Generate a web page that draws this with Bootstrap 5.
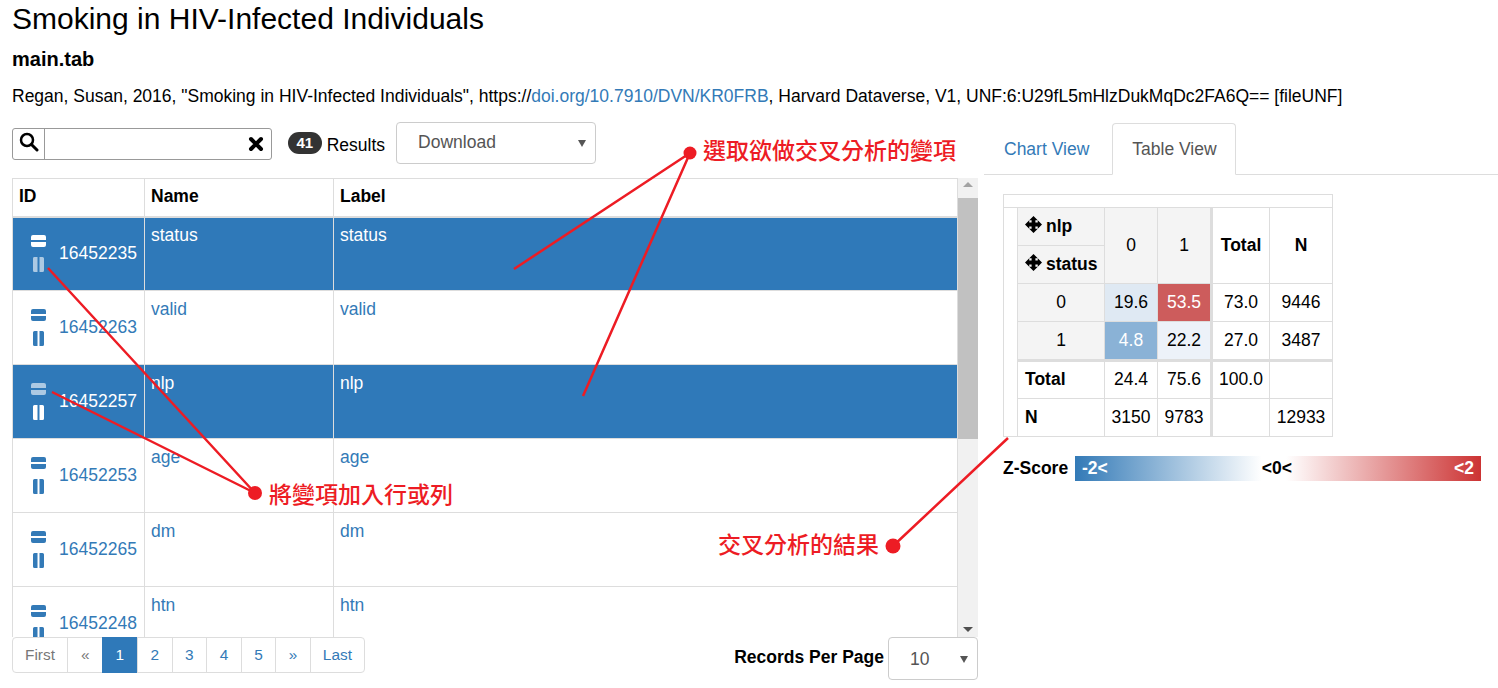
<!DOCTYPE html>
<html lang="en">
<head>
  <meta charset="UTF-8">
  <title>Smoking in HIV-Infected Individuals</title>
  <link rel="stylesheet" href="https://cdn.jsdelivr.net/npm/bootstrap@5.3.3/dist/css/bootstrap.min.css">
  <style>
    html, body { height: 688px; overflow: hidden; }
    body { font-family: "Liberation Sans", Arial, sans-serif; font-size: 17.5px; color: #000; background: #fff; position: relative; }
    a { color: #337ab7; text-decoration: none; }
    .page-head { padding: 0 12px; }
    .page-title { font-size: 30px; line-height: 38px; font-weight: 400; margin: 0; }
    .file-name { font-size: 20px; line-height: 24px; font-weight: 700; margin: 9px 0 13px; }
    .cite { line-height: 24px; margin: 0; white-space: nowrap; }
    .work { margin-top: 14px; }
    .left-pane { width: 978px; padding-left: 12px; flex: none; }
    .right-pane { width: 520px; padding-left: 6px; flex: none; }
    .tool-row { height: 54px; padding-top: 6px; }
    .search-box { width: 260px; height: 32px; border: 1px solid #999; border-radius: 3px; }
    .search-ico { width: 32px; border-right: 1px solid #999; }
    .search-ico svg { display: block; margin: 3px 0 0 6px; }
    .clear-ico { margin-right: 7px; }
    .count-pill { background: #333; color: #fff; font-size: 15px; font-weight: 700; border-radius: 11px; padding: 0 8.500px; height: 22px; line-height: 22px; margin: 0 5px 0 16px; }
    .pick { border: 1px solid #ccc; border-radius: 4px; color: #555; background: #fff; position: relative; line-height: 1; }
    .pick::after { content: ""; position: absolute; right: 9px; top: 50%; margin-top: -3px; border: 4px solid transparent; border-top: 7px solid #555; border-bottom: 0; }
    .pick-dl { width: 200px; height: 42px; margin-left: 11px; padding: 11px 0 0 21px; margin-top: -6px; }
    .grid-wrap { height: 459px; overflow: hidden; position: relative; margin-top: 2px; }
    .var-table { table-layout: fixed; width: 946px; border-collapse: collapse; margin: 0; }
    .var-table th, .var-table td { border: 1px solid #ddd; padding: 6px; vertical-align: top; height: 74px; line-height: 24px; }
    .var-table th { height: 38px; font-weight: 700; border-bottom-width: 2px; vertical-align: middle; padding: 5px 6px 7px; }
    .var-table td { color: #337ab7; }
    .var-table .chosen td { background: #2f79b9; color: #fff; }
    .var-table tbody tr:first-child td { padding-top: 5px; }
    .var-table tbody tr:first-child .id-cell { margin-top: -1px; }
    .id-cell { display: flex; padding-left: 18px; }
    .id-ico { width: 28px; padding-top: 18px; }
    .id-ico svg { display: block; }
    .id-ico svg + svg { margin: 10px 0 0 2px; }
    .id-num { padding-top: 24px; }
    .scroll-rail { position: absolute; right: 0; top: 0; bottom: 0; width: 20px; background: #f1f1f1; }
    .scroll-thumb { position: absolute; left: 0; right: 0; top: 20px; height: 241px; background: #c1c1c1; }
    .scroll-up, .scroll-down { position: absolute; left: 5px; width: 0; border: 5px solid transparent; }
    .scroll-up { top: 4px; border-bottom: 5px solid #a3a3a3; border-top: 0; }
    .scroll-down { bottom: 5px; border-top: 5px solid #505050; border-bottom: 0; }
    .pager-box { display: flex; height: 36px; border: 1px solid #ddd; border-radius: 4px; font-size: 15.4px; line-height: 34px; }
    .pager-box span { padding: 0 12.500px; border-left: 1px solid #ddd; color: #337ab7; text-align: center; }
    .pager-box span:first-child { border-left: 0; color: #777; padding: 0 12px; }
    .pager-box .dim { color: #777; padding: 0 13px; }
    .pager-box .on { background: #2f79b9; color: #fff; border-left: 0; margin: -1px 0; line-height: 36px; padding: 0 13px; }
    .pager-box .far { padding: 0 12px; }
    .rpp-label { font-weight: 700; line-height: 40px; margin-right: 4px; }
    .pick-rpp { width: 90px; height: 43px; padding: 13px 0 0 21px; }
    .view-tabs { height: 52px; margin-top: 1px; border-bottom: 1px solid #ddd; }
    .view-tabs a { display: block; padding: 14px 20px; line-height: 24px; height: 51px; margin-right: 3px; }
    .view-tabs .cur { color: #555; border: 1px solid #ddd; border-bottom-color: #fff; border-radius: 4px 4px 0 0; height: 52px; padding: 13px 18.500px 13px 19px; }
    .pivot-wrap { padding: 19px 0 0 19px; }
    .pivot { border-collapse: collapse; table-layout: fixed; width: 329px; }
    .pivot td { border: 1px solid #ddd; text-align: center; padding: 0 0 2px; height: 38px; line-height: 24px; }
    .pivot .blank { height: 13px; }
    .pivot .thead { background: #f4f4f4; }
    .pivot .tl { text-align: left; padding-left: 7px; font-weight: 700; white-space: nowrap; }
    .pivot .tl svg { vertical-align: -1px; margin-right: 4px; }
    .pivot .hd { font-weight: 700; }
    .pivot .lh { font-weight: 700; text-align: left; padding-left: 7px; }
    .pivot .c-a { border-left-width: 3px; }
    .pivot .r-a td { border-top-width: 3px; }
    .pivot .r-b td { height: 39px; padding-bottom: 1px; }
    .pivot .cell-a { background: #dfe9f3; }
    .pivot .cell-b { background: #cd5c5c; color: #fff; }
    .pivot .cell-c { background: #8ab2d6; color: #fff; }
    .pivot .cell-d { background: #edf2f9; }
    .z-row { padding: 19px 0 0 19px; height: 44px; }
    .z-label { font-weight: 700; width: 72px; line-height: 25px; }
    .z-bar { width: 406px; height: 25px; line-height: 25px; padding: 0 7px; font-weight: 700; background: linear-gradient(90deg, #337ab7, #fff 46%, #fff 52%, #c33); }
    .z-bar .ends { color: #fff; }
    .z-mid { margin-right: 8px; }
    .marks { position: absolute; left: 0; top: 0; width: 1498px; height: 688px; pointer-events: none; }
    .note { position: absolute; color: #ed1c24; font-size: 23px; font-weight: 500; line-height: 28px; white-space: nowrap; font-family: "Liberation Sans", "Noto Sans CJK TC", sans-serif; }
    .note-a { left: 703px; top: 137px; }
    .note-b { left: 269px; top: 481px; }
    .note-c { left: 718px; top: 531px; }
  </style>
</head>
<body>
  <svg width="0" height="0" class="position-absolute">
    <defs>
      <symbol id="ico-rows" viewBox="0 0 15 12"><path d="M2 0h11a2 2 0 0 1 2 2v3H0V2a2 2 0 0 1 2-2zM0 7h15v3a2 2 0 0 1-2 2H2a2 2 0 0 1-2-2z" fill="currentColor"/></symbol>
      <symbol id="ico-cols" viewBox="0 0 11 15"><path d="M1.500 0H4.500v15H1.500A1.500 1.500 0 0 1 0 13.500V1.500A1.500 1.500 0 0 1 1.500 0zM6.500 0H9.500A1.500 1.500 0 0 1 11 1.500v12a1.500 1.500 0 0 1-1.500 1.500H6.500z" fill="currentColor"/></symbol>
      <symbol id="ico-move" viewBox="0 0 18 18"><path d="M9 0L13.500 4.500H11V7H13.500V4.500L18 9L13.500 13.500V11H11V13.500H13.500L9 18L4.500 13.500H7V11H4.500V13.500L0 9L4.500 4.500V7H7V4.500H4.500Z" fill="#000"/></symbol>
    </defs>
  </svg>

  <div class="page-head">
    <h1 class="page-title">Smoking in HIV-Infected Individuals</h1>
    <h2 class="file-name">main.tab</h2>
    <p class="cite">Regan, Susan, 2016, "Smoking in HIV-Infected Individuals", https://<a href="#">doi.org/10.7910/DVN/KR0FRB</a>, Harvard Dataverse, V1, UNF:6:U29fL5mHlzDukMqDc2FA6Q== [fileUNF]</p>
  </div>

  <div class="work d-flex">
    <div class="left-pane">
      <div class="tool-row d-flex align-items-start">
        <div class="search-box d-flex">
          <div class="search-ico">
            <svg width="20" height="20" viewBox="0 0 20 20"><circle cx="8" cy="8" r="6" fill="none" stroke="#000" stroke-width="2.500"/><path d="M12.500 12.500L18 18" stroke="#000" stroke-width="3" stroke-linecap="round"/></svg>
          </div>
          <div class="flex-grow-1"></div>
          <svg class="clear-ico align-self-center" width="16" height="16" viewBox="0 0 16 16"><path d="M3 3l10 10M13 3L3 13" stroke="#000" stroke-width="4" stroke-linecap="round"/></svg>
        </div>
        <span class="count-pill mt-1">41</span>
        <span class="mt-1">Results</span>
        <div class="pick pick-dl">Download</div>
      </div>

      <div class="grid-wrap">
        <table class="var-table">
          <colgroup><col style="width:132px"><col style="width:189px"><col></colgroup>
          <thead><tr><th>ID</th><th>Name</th><th>Label</th></tr></thead>
          <tbody>
            <tr class="chosen"><td class="p-0"><div class="id-cell"><div class="id-ico"><svg width="15" height="12"><use href="#ico-rows"/></svg><svg width="11" height="15" opacity=".6"><use href="#ico-cols"/></svg></div><div class="id-num">16452235</div></div></td><td>status</td><td>status</td></tr>
            <tr><td class="p-0"><div class="id-cell"><div class="id-ico"><svg width="15" height="12"><use href="#ico-rows"/></svg><svg width="11" height="15"><use href="#ico-cols"/></svg></div><div class="id-num">16452263</div></div></td><td>valid</td><td>valid</td></tr>
            <tr class="chosen"><td class="p-0"><div class="id-cell"><div class="id-ico"><svg width="15" height="12" opacity=".6"><use href="#ico-rows"/></svg><svg width="11" height="15"><use href="#ico-cols"/></svg></div><div class="id-num">16452257</div></div></td><td>nlp</td><td>nlp</td></tr>
            <tr><td class="p-0"><div class="id-cell"><div class="id-ico"><svg width="15" height="12"><use href="#ico-rows"/></svg><svg width="11" height="15"><use href="#ico-cols"/></svg></div><div class="id-num">16452253</div></div></td><td>age</td><td>age</td></tr>
            <tr><td class="p-0"><div class="id-cell"><div class="id-ico"><svg width="15" height="12"><use href="#ico-rows"/></svg><svg width="11" height="15"><use href="#ico-cols"/></svg></div><div class="id-num">16452265</div></div></td><td>dm</td><td>dm</td></tr>
            <tr><td class="p-0"><div class="id-cell"><div class="id-ico"><svg width="15" height="12"><use href="#ico-rows"/></svg><svg width="11" height="15"><use href="#ico-cols"/></svg></div><div class="id-num">16452248</div></div></td><td>htn</td><td>htn</td></tr>
          </tbody>
        </table>
        <div class="scroll-rail"><div class="scroll-up"></div><div class="scroll-thumb"></div><div class="scroll-down"></div></div>
      </div>

      <div class="d-flex justify-content-between align-items-start">
        <div class="pager-box">
          <span>First</span><span class="dim">«</span><span class="on">1</span><span>2</span><span>3</span><span>4</span><span>5</span><span>»</span><span class="far">Last</span>
        </div>
        <div class="d-flex">
          <div class="rpp-label">Records Per Page</div>
          <div class="pick pick-rpp">10</div>
        </div>
      </div>
    </div>

    <div class="right-pane">
      <div class="view-tabs d-flex">
        <a href="#">Chart View</a>
        <a href="#" class="cur">Table View</a>
      </div>
      <div class="pivot-wrap">
        <table class="pivot">
          <colgroup><col style="width:14px"><col style="width:87px"><col style="width:53px"><col style="width:54px"><col style="width:58px"><col style="width:63px"></colgroup>
          <tr><td class="blank" colspan="6"></td></tr>
          <tr><td rowspan="6"></td><td class="thead tl"><svg width="17" height="17"><use href="#ico-move"/></svg>nlp</td><td class="thead" rowspan="2">0</td><td class="thead" rowspan="2">1</td><td class="hd c-a" rowspan="2">Total</td><td class="hd" rowspan="2">N</td></tr>
          <tr><td class="thead tl"><svg width="17" height="17"><use href="#ico-move"/></svg>status</td></tr>
          <tr><td class="thead">0</td><td class="cell-a">19.6</td><td class="cell-b">53.5</td><td class="c-a">73.0</td><td>9446</td></tr>
          <tr class="r-b"><td class="thead">1</td><td class="cell-c">4.8</td><td class="cell-d">22.2</td><td class="c-a">27.0</td><td>3487</td></tr>
          <tr class="r-a"><td class="lh">Total</td><td>24.4</td><td>75.6</td><td class="c-a">100.0</td><td></td></tr>
          <tr><td class="lh">N</td><td>3150</td><td>9783</td><td class="c-a"></td><td>12933</td></tr>
        </table>
      </div>
      <div class="z-row d-flex">
        <div class="z-label">Z-Score</div>
        <div class="z-bar d-flex justify-content-between">
          <span class="ends">-2&lt;</span><span class="z-mid">&lt;0&lt;</span><span class="ends">&lt;2</span>
        </div>
      </div>
    </div>
  </div>

  <svg class="marks" viewBox="0 0 1498 688">
    <g stroke="#ed1c24" stroke-width="2.500" fill="none">
      <path d="M690 153L514 269M690 153L583 396M255 493L48 268M255 493L52 392M893 546L1008 438"/>
    </g>
    <g fill="#ed1c24">
      <circle cx="690" cy="153" r="6.500"/>
      <circle cx="255" cy="493" r="7"/>
      <circle cx="893" cy="546" r="7.500"/>
    </g>
  </svg>
  <div class="note note-a">選取欲做交叉分析的變項</div>
  <div class="note note-b">將變項加入行或列</div>
  <div class="note note-c">交叉分析的結果</div>

  <script src="https://cdn.jsdelivr.net/npm/bootstrap@5.3.3/dist/js/bootstrap.bundle.min.js"></script>
</body>
</html>
